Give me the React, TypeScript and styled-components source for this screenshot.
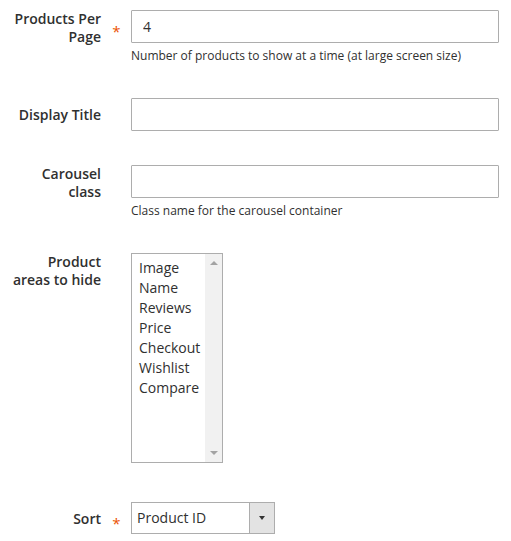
import React from 'react'
import styled, { createGlobalStyle } from 'styled-components'

const GlobalStyle = createGlobalStyle`
  body {
    margin: 0;
    background: #ffffff;
    font-family: 'Open Sans', 'Liberation Sans', sans-serif;
    color: #303030;
  }
`

const areas = ['Image', 'Name', 'Reviews', 'Price', 'Checkout', 'Wishlist', 'Compare']

const Form = () => {
  return (
    <StyledForm>
      <GlobalStyle />
      <Field gap={34}>
        <Label>
          <span>Products Per Page</span>
        </Label>
        <Marker required />
        <Control>
          <TextInput defaultValue="4" />
          <Note>Number of products to show at a time (at large screen size)</Note>
        </Control>
      </Field>
      <Field gap={34}>
        <Label>
          <span>Display Title</span>
        </Label>
        <Marker />
        <Control>
          <TextInput />
        </Control>
      </Field>
      <Field gap={34}>
        <Label>
          <span>Carousel class</span>
        </Label>
        <Marker />
        <Control>
          <TextInput />
          <Note>Class name for the carousel container</Note>
        </Control>
      </Field>
      <Field gap={39}>
        <Label>
          <span>Product areas to hide</span>
        </Label>
        <Marker />
        <Control>
          <ListBox>
            <ListItems>
              {areas.map((a) => (
                <ListItem key={a}>{a}</ListItem>
              ))}
            </ListItems>
            <ScrollTrack>
              <ScrollArrow up />
              <ScrollArrow />
            </ScrollTrack>
          </ListBox>
        </Control>
      </Field>
      <Field gap={0}>
        <Label>
          <span>Sort</span>
        </Label>
        <Marker required />
        <Control>
          <SelectBox>
            <SelectValue>Product ID</SelectValue>
            <SelectButton>
              <DownCaret />
            </SelectButton>
          </SelectBox>
        </Control>
      </Field>
    </StyledForm>
  )
}

const StyledForm = styled.div`
  padding: 10px 12px 0 0;
  box-sizing: border-box;
  width: 511px;
`

const Field = styled.div<{ gap: number }>`
  display: grid;
  grid-template-columns: 101px 30px 1fr;
  align-items: start;
  margin-bottom: ${(props) => props.gap}px;
`

const Label = styled.label`
  box-sizing: border-box;
  display: flex;
  align-items: center;
  justify-content: flex-end;
  min-height: 33px;
  padding-left: 10px;
  text-align: right;
  font-size: 14px;
  font-weight: 600;
  line-height: 18px;
  color: #303030;

  span {
    display: block;
  }
`

const Marker = styled.div<{ required?: boolean }>`
  height: 33px;
  display: flex;
  align-items: center;
  justify-content: center;

  &::after {
    content: '${(props) => (props.required ? '*' : '')}';
    color: #eb5202;
    font-size: 15px;
    line-height: 1;
    margin-top: 9px;
    margin-left: 1px;
  }
`

const Control = styled.div`
  display: flex;
  flex-direction: column;
  align-items: flex-start;
`

const TextInput = styled.input`
  box-sizing: border-box;
  width: 100%;
  height: 33px;
  border: 1px solid #adadad;
  border-radius: 1px;
  padding: 0 11px;
  font-family: 'Open Sans', 'Liberation Sans', sans-serif;
  font-size: 14px;
  color: #303030;
  background: #fff;
  outline: none;
`

const Note = styled.div`
  margin-top: 5px;
  font-size: 12px;
  line-height: 16px;
  color: #303030;
`

const ListBox = styled.div`
  box-sizing: border-box;
  width: 92px;
  height: 210px;
  border: 1px solid #adadad;
  display: flex;
  background: #fff;
`

const ListItems = styled.div`
  flex: 1;
  padding: 4px 0 0 7px;
`

const ListItem = styled.div`
  font-size: 14px;
  line-height: 20px;
  color: #303030;
  white-space: nowrap;
`

const ScrollTrack = styled.div`
  width: 17px;
  background: #f1f1f1;
  display: flex;
  flex-direction: column;
  justify-content: space-between;
  align-items: center;
  padding: 7px 0;
`

const ScrollArrow = styled.div<{ up?: boolean }>`
  width: 0;
  height: 0;
  border-left: 4px solid transparent;
  border-right: 4px solid transparent;
  ${(props) =>
    props.up ? 'border-bottom: 4px solid #a3a3a3;' : 'border-top: 4px solid #a3a3a3;'}
`

const SelectBox = styled.div`
  box-sizing: border-box;
  width: 144px;
  height: 32px;
  border: 1px solid #adadad;
  display: flex;
  background: #fff;
`

const SelectValue = styled.div`
  flex: 1;
  padding-left: 5px;
  font-size: 14px;
  line-height: 30px;
  color: #303030;
`

const SelectButton = styled.div`
  width: 24px;
  border-left: 1px solid #adadad;
  background: #e3e3e3;
  display: flex;
  align-items: center;
  justify-content: center;
`

const DownCaret = styled.div`
  width: 0;
  height: 0;
  border-left: 3.5px solid transparent;
  border-right: 3.5px solid transparent;
  border-top: 4px solid #333;
`

export default function App() {
  return <Form />
}
